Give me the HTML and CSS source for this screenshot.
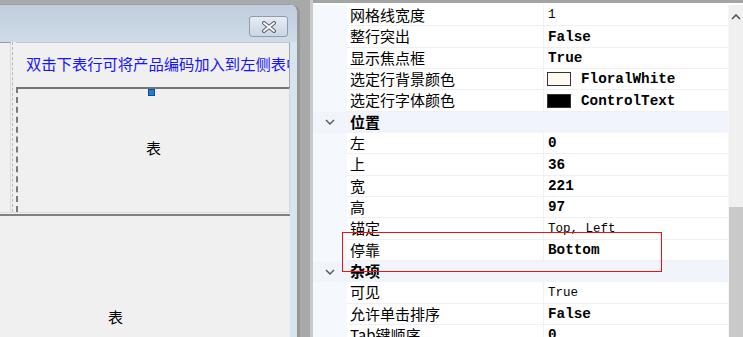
FILE: index.html
```html
<!doctype html>
<html>

<head>
    <title>Designer</title>
    <meta charset="utf-8">
    <link rel="stylesheet" href="styles.css">
</head>

<body>
    <div class="stage">
        <div class="win">
            <div class="titlebar">
                <div class="close">
                    <svg width="16" height="12" viewBox="0 0 16 12">
                        <path d="M3 2 L13 10 M13 2 L3 10" stroke="#5a5f66" stroke-width="4" stroke-linecap="round"/>
                        <path d="M3 2 L13 10 M13 2 L3 10" stroke="#ffffff" stroke-width="2" stroke-linecap="round"/>
                    </svg>
                </div>
            </div>
            <div class="client">
                <div class="toprow">
                    <div class="leftstrip"></div>
                    <div class="vsplit"></div>
                    <div class="rightcol">
                        <div class="labelpanel">双击下表行可将产品编码加入到左侧表中</div>
                        <div class="tablepanel">
                            <span>表</span>
                            <div class="handle"></div>
                        </div>
                    </div>
                </div>
                <div class="hsplit"></div>
                <div class="bottompanel"><span>表</span></div>
            </div>
        </div>
        <div class="gap"></div>
        <div class="props">
            <div class="grid">
                <div class="row"><span class="gut"></span><span class="name">网格线宽度</span><span class="val">1</span></div>
                <div class="row"><span class="gut"></span><span class="name">整行突出</span><span class="val b">False</span></div>
                <div class="row"><span class="gut"></span><span class="name">显示焦点框</span><span class="val b">True</span></div>
                <div class="row"><span class="gut"></span><span class="name">选定行背景颜色</span><span class="val b"><i class="swatch floral"></i>FloralWhite</span></div>
                <div class="row"><span class="gut"></span><span class="name">选定行字体颜色</span><span class="val b"><i class="swatch black"></i>ControlText</span></div>
                <div class="row cat"><span class="gut"><svg width="10" height="6" viewBox="0 0 10 6"><path d="M1 1 L5 5 L9 1" fill="none" stroke="#555" stroke-width="1.4"/></svg></span><span class="name">位置</span><span class="val"></span></div>
                <div class="row"><span class="gut"></span><span class="name">左</span><span class="val b">0</span></div>
                <div class="row"><span class="gut"></span><span class="name">上</span><span class="val b">36</span></div>
                <div class="row"><span class="gut"></span><span class="name">宽</span><span class="val b">221</span></div>
                <div class="row"><span class="gut"></span><span class="name">高</span><span class="val b">97</span></div>
                <div class="row"><span class="gut"></span><span class="name">锚定</span><span class="val">Top, Left</span></div>
                <div class="row"><span class="gut"></span><span class="name">停靠</span><span class="val b">Bottom</span></div>
                <div class="row cat"><span class="gut"><svg width="10" height="6" viewBox="0 0 10 6"><path d="M1 1 L5 5 L9 1" fill="none" stroke="#555" stroke-width="1.4"/></svg></span><span class="name">杂项</span><span class="val"></span></div>
                <div class="row"><span class="gut"></span><span class="name">可见</span><span class="val">True</span></div>
                <div class="row"><span class="gut"></span><span class="name">允许单击排序</span><span class="val b">False</span></div>
                <div class="row"><span class="gut"></span><span class="name">Tab键顺序</span><span class="val b">0</span></div>
                <div class="redbox"></div>
            </div>
            <div class="scroll">
                <div class="track">
                    <svg width="10" height="6" viewBox="0 0 10 6"><path d="M1 5 L5 1 L9 5" fill="none" stroke="#555" stroke-width="1.6"/></svg>
                </div>
                <div class="thumb"></div>
            </div>
        </div>
    </div>
</body>

</html>
```

FILE: styles.css
```css
body {
    margin: 0;
    width: 743px;
    height: 337px;
    overflow: hidden;
    background-color: #a9a9a9;
    font-family: "Noto Sans CJK SC", "DejaVu Sans", sans-serif;
}

.stage {
    display: flex;
    height: 337px;
}

/* designer window */
.win {
    width: 297px;
    flex-shrink: 0;
    margin-top: 4px;
    display: flex;
    flex-direction: column;
    background-color: #d6e3f1;
    border-top: 1px solid #9aa4ae;
    border-right: 3px solid #979797;
    border-top-right-radius: 9px;
}

.titlebar {
    height: 37px;
    flex-shrink: 0;
    display: flex;
    justify-content: flex-end;
    align-items: flex-start;
    background: linear-gradient(#bfcddc, #cfdbe9);
    border-top-right-radius: 8px;
}

.close {
    width: 37px;
    height: 19px;
    margin-top: 11px;
    margin-right: 9px;
    border: 1px solid #8e9cab;
    border-radius: 3px;
    background: linear-gradient(#e6ecf3, #cad6e3);
    display: flex;
    align-items: center;
    justify-content: center;
}

.client {
    flex: 1;
    margin-right: 7px;
    display: flex;
    flex-direction: column;
    background-color: #f0f0f0;
    min-height: 0;
    min-width: 0;
}

.toprow {
    height: 170px;
    flex-shrink: 0;
    display: flex;
}

.leftstrip {
    width: 10px;
    flex-shrink: 0;
    border-top: 1px solid #9a9a9a;
    border-right: 1px solid #dadada;
}

.vsplit {
    width: 3px;
    flex-shrink: 0;
    margin-left: 1px;
    border-left: 1px dashed #b8b8b8;
}

.rightcol {
    flex: 1;
    min-width: 0;
    display: flex;
    flex-direction: column;
}

.labelpanel {
    height: 45px;
    box-sizing: border-box;
    border-top: 1px solid #c6c6c6;
    border-right: 1px solid #a8a8a8;
    padding: 10px 0 0 10px;
    color: #1414ff;
    font-size: 15.3px;
    line-height: 20px;
    white-space: nowrap;
    overflow: hidden;
}

.tablepanel {
    position: relative;
    flex: 1;
    display: flex;
    justify-content: center;
    align-items: center;
    border-top: 2px solid #737373;
    border-left: 2px dashed #7a7a7a;
    border-right: 1px solid #d6d6d6;
    font-size: 15px;
    padding-bottom: 6px;
}

.handle {
    position: absolute;
    left: 130px;
    top: 0;
    width: 5px;
    height: 5px;
    background-color: #1a7fd6;
    border: 1px solid #0d4f8f;
}

.hsplit {
    height: 1px;
    flex-shrink: 0;
    border-top: 1px solid #dcdcdc;
    border-bottom: 2px solid #808080;
}

.bottompanel {
    flex: 1;
    padding: 90px 0 0 108px;
    font-size: 15px;
}

.gap {
    width: 10px;
    flex-shrink: 0;
    border-right: 3px solid #cacaca;
}

/* property grid */
.props {
    flex: 1;
    display: flex;
    background-color: #ffffff;
    border-top: 3px solid #a4a4a4;
    padding-top: 2px;
    overflow: hidden;
}

.grid {
    position: relative;
    flex: 1;
}

.row {
    display: grid;
    grid-template-columns: 34px 197px 1fr;
    height: 21.35px;
    font-size: 15px;
}

.gut {
    background-color: #f5f8fc;
    display: flex;
    align-items: center;
    justify-content: center;
}

.name {
    padding-left: 3px;
    line-height: 20px;
    border-bottom: 1px solid #f0f0f0;
    border-right: 1px solid #f0f0f0;
    white-space: nowrap;
}

.val {
    display: flex;
    align-items: center;
    padding-left: 4px;
    border-bottom: 1px solid #f0f0f0;
    font-family: "Liberation Mono", monospace;
    font-size: 12.5px;
}

.val.b {
    font-weight: bold;
    font-size: 14.3px;
}

.cat {
    background-color: #f1f5fb;
}

.cat .gut,
.cat .name,
.cat .val {
    background-color: #f1f5fb;
    border-color: #f1f5fb;
}

.cat .name {
    font-weight: bold;
}

.swatch {
    width: 22px;
    height: 12px;
    margin: 0 10px 0 -1px;
    border: 1px solid #333;
}

.floral {
    background-color: #fffaf0;
}

.black {
    background-color: #000000;
}

.redbox {
    position: absolute;
    left: 29px;
    top: 227px;
    width: 318px;
    height: 38px;
    border: 1px solid #ee1111;
}

.scroll {
    width: 14px;
    display: flex;
    flex-direction: column;
    border-left: 1px solid #f6f6f6;
}

.track {
    height: 202px;
    background-color: #f0f0f0;
    display: flex;
    justify-content: center;
    padding-top: 9px;
    box-sizing: border-box;
}

.thumb {
    flex: 1;
    background-color: #c9c9c9;
}
```
